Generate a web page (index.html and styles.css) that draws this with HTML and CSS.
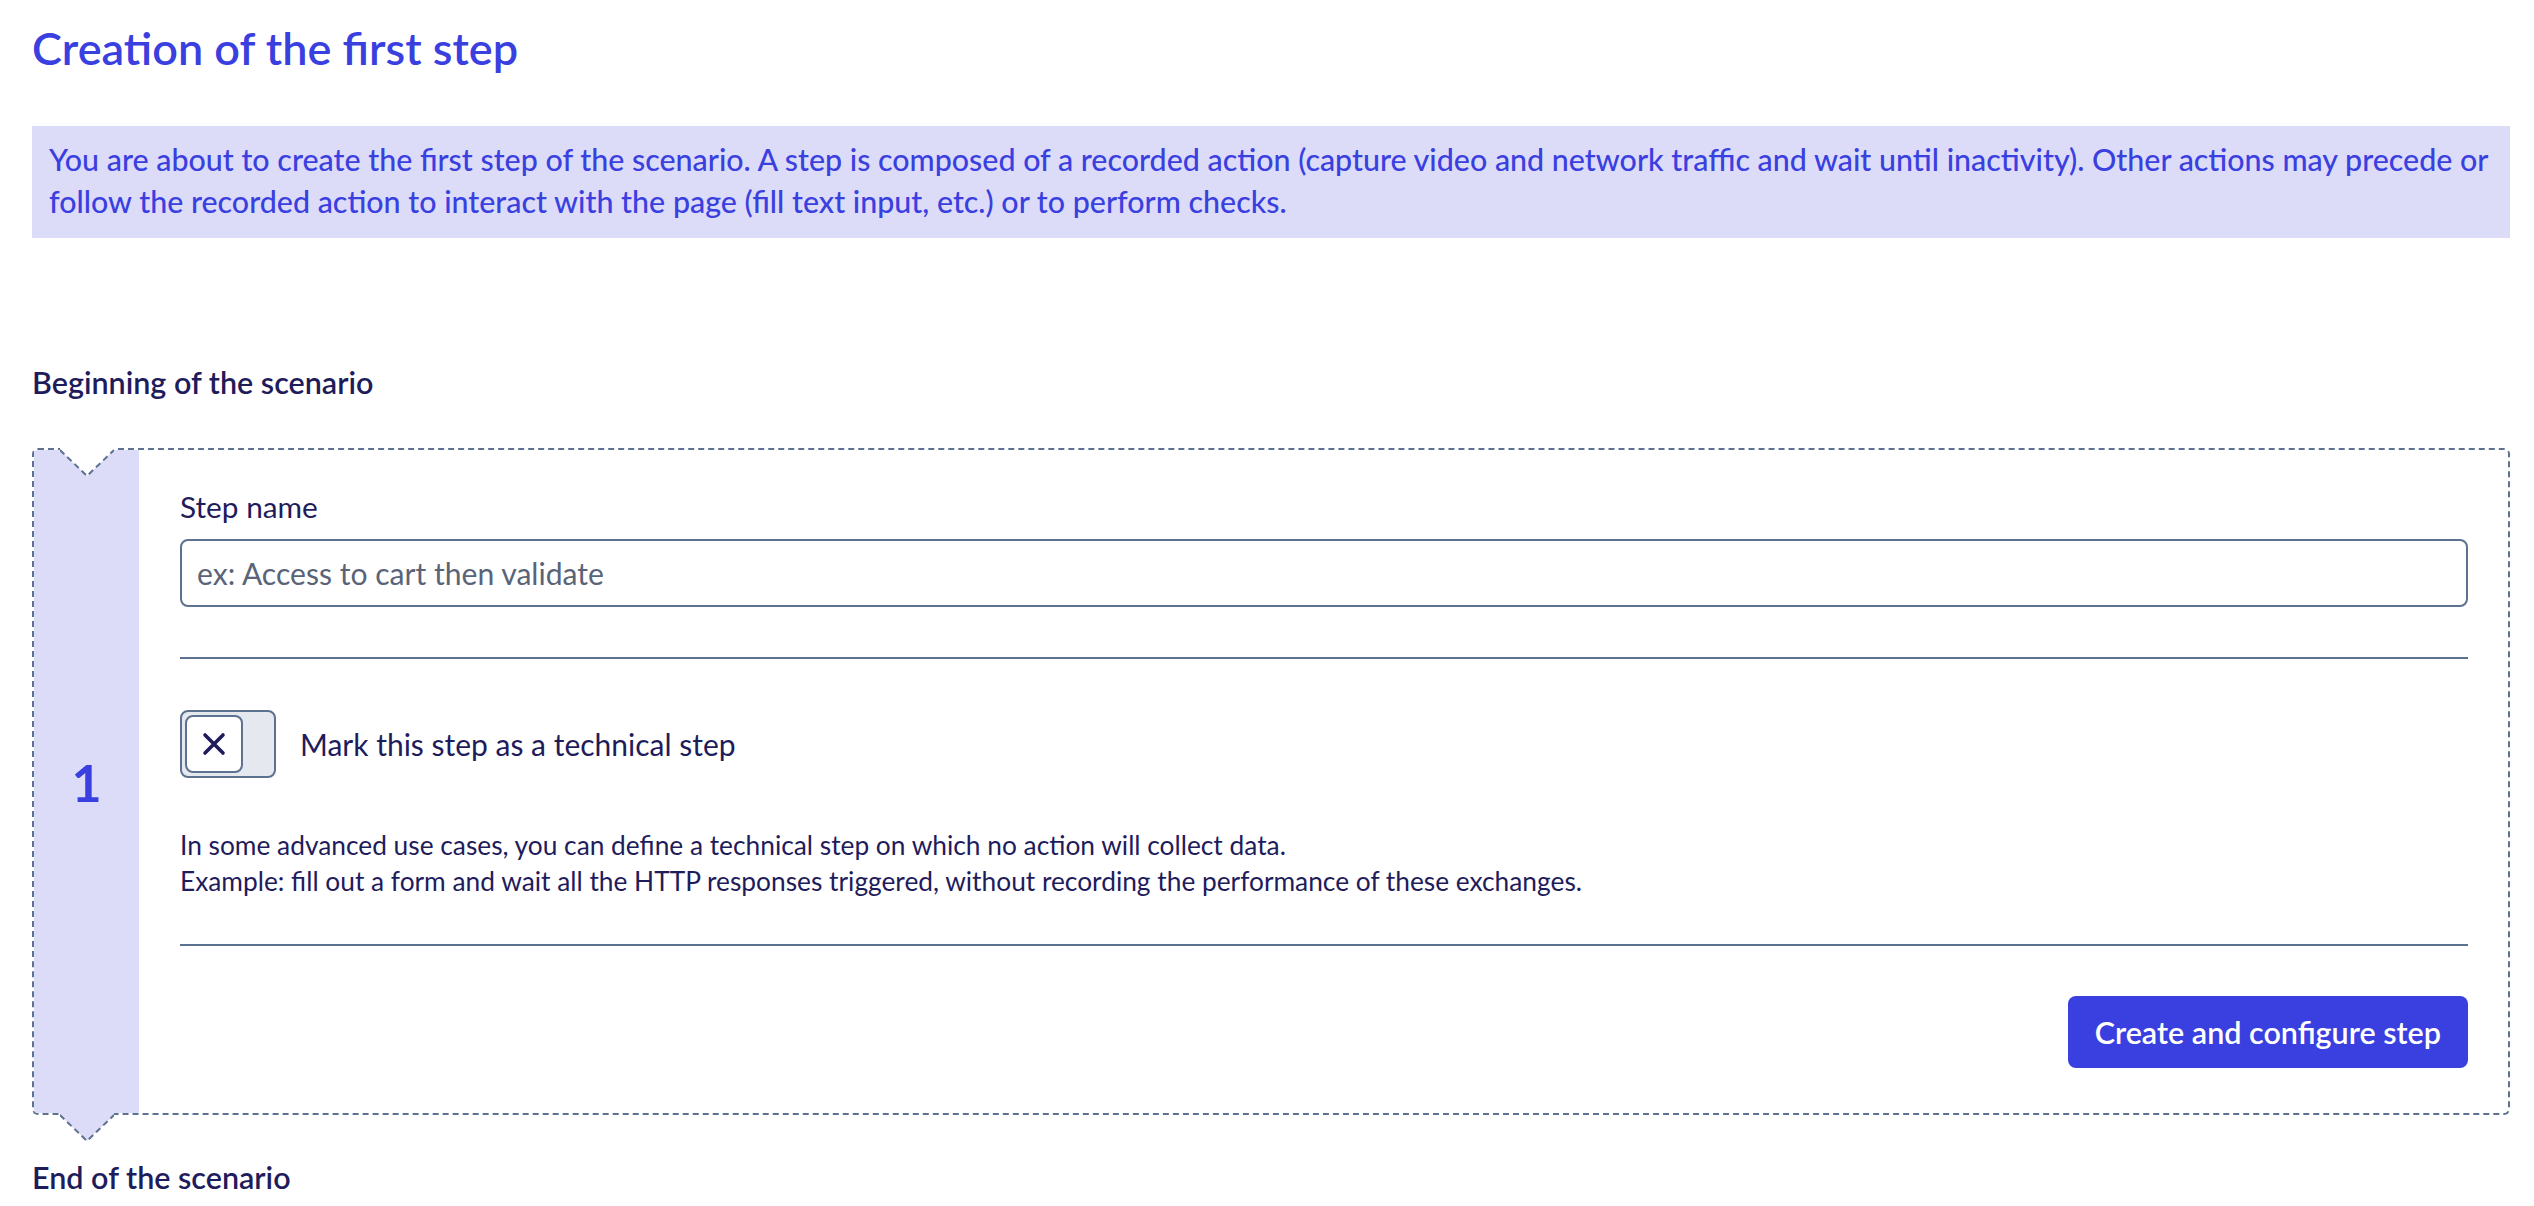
FILE: index.html
```html
<!DOCTYPE html>
<html lang="en">
<head>
    <meta charset="UTF-8">
    <meta name="viewport" content="width=device-width, initial-scale=1.0">
    <title>Creation of the first step</title>
    <link rel="stylesheet" href="styles.css">
</head>
<body>
    <div class="page">
        <h1 class="page-title">Creation of the first step</h1>

        <div class="info-box">
            You are about to create the first step of the scenario. A step is composed of a recorded action (capture video and network traffic and wait until inactivity). Other actions may precede or follow the recorded action to interact with the page (fill text input, etc.) or to perform checks.
        </div>

        <div class="scenario-label scenario-start">Beginning of the scenario</div>

        <div class="step-card">
            <div class="step-index">
                <svg class="notch" width="54" height="30" viewBox="0 0 54 30">
                    <polygon points="0,0 54,0 54,2 27,28 0,2" fill="#ffffff"/>
                    <polyline points="0,2 27,28 54,2" fill="none" stroke="#5d7190" stroke-width="2" stroke-dasharray="6 4"/>
                </svg>
                <span class="step-number">1</span>
                <svg class="pointer" width="54" height="30" viewBox="0 0 54 30">
                    <polygon points="0,0 54,0 54,2 27,28 0,2" fill="#dcdcf8"/>
                    <polyline points="0,2 27,28 54,2" fill="none" stroke="#5d7190" stroke-width="2" stroke-dasharray="6 4"/>
                </svg>
            </div>

            <div class="step-body">
                <label class="field-label" for="step-name">Step name</label>
                <input class="text-input" id="step-name" type="text" placeholder="ex: Access to cart then validate">

                <hr class="divider">

                <div class="toggle-row">
                    <div class="toggle">
                        <div class="toggle-knob">
                            <svg width="24" height="24" viewBox="0 0 24 24">
                                <path d="M3 3 L21 21 M21 3 L3 21" stroke="#1f1c5c" stroke-width="3.6" stroke-linecap="round"/>
                            </svg>
                        </div>
                    </div>
                    <span class="toggle-label">Mark this step as a technical step</span>
                </div>

                <p class="help-text">
                    In some advanced use cases, you can define a technical step on which no action will collect data.<br>
                    Example: fill out a form and wait all the HTTP responses triggered, without recording the performance of these exchanges.
                </p>

                <hr class="divider">

                <div class="actions">
                    <button class="btn-primary">Create and configure step</button>
                </div>
            </div>
        </div>

        <div class="scenario-label scenario-end">End of the scenario</div>
    </div>
</body>
</html>
```

FILE: styles.css
```css
body {
    margin: 0;
    padding: 0;
    font-family: 'Lato', 'Open Sans', sans-serif;
    color: #1f1c5c;
    background-color: #ffffff;
}

.page {
    padding: 0 24px 0 32px;
}

.page-title {
    margin: 21px 0 51px;
    font-size: 45px;
    line-height: 54px;
    font-weight: 600;
    color: #3a40df;
}

.info-box {
    background-color: #dcdcf8;
    color: #3a40df;
    font-size: 30.4px;
    font-weight: 500;
    line-height: 42px;
    padding: 12px 17px 16px;
}

.scenario-label {
    font-size: 30.5px;
    line-height: 38px;
    font-weight: 600;
    color: #1f1c5c;
}

.scenario-start {
    margin: 125px 0 47px;
}

.scenario-end {
    margin-top: 43px;
}

.step-card {
    display: flex;
    position: relative;
    border: 2px dashed #5d7190;
    border-radius: 6px;
}

.step-index {
    position: relative;
    flex: 0 0 105px;
    background-color: #dcdcf8;
    border-radius: 4px 0 0 4px;
    display: flex;
    align-items: center;
    justify-content: center;
}

.step-number {
    font-size: 52px;
    font-weight: 700;
    color: #3a40df;
}

.notch, .pointer {
    position: absolute;
    left: 26px;
}

.notch {
    top: -2px;
}

.pointer {
    bottom: -30px;
}

.step-body {
    flex: 1;
    padding: 39px 40px 45px 41px;
}

.field-label {
    display: block;
    font-size: 29.8px;
    line-height: 36px;
    margin-bottom: 14px;
}

.text-input {
    display: block;
    box-sizing: border-box;
    width: 100%;
    height: 68px;
    border: 2px solid #5d7190;
    border-radius: 8px;
    padding: 0 15px;
    font-family: inherit;
    font-size: 30.1px;
    color: #1f1c5c;
}

.text-input::placeholder {
    color: #5a6478;
}

.divider {
    border: none;
    border-top: 2px solid #5d7190;
    margin: 50px 0 51px;
}

.toggle-row {
    display: flex;
    align-items: center;
    gap: 24px;
}

.toggle {
    box-sizing: border-box;
    width: 96px;
    height: 68px;
    border: 2px solid #5d7190;
    border-radius: 8px;
    background-color: #e5e8ef;
    padding: 3px;
}

.toggle-knob {
    box-sizing: border-box;
    width: 58px;
    height: 58px;
    border: 2px solid #5d7190;
    border-radius: 8px;
    background-color: #ffffff;
    display: flex;
    align-items: center;
    justify-content: center;
}

.toggle-label {
    font-size: 30px;
}

.help-text {
    font-size: 26.3px;
    line-height: 36px;
    margin: 49px 0 45px;
}

.help-text + .divider {
    margin: 0 0 50px;
}

.actions {
    display: flex;
    justify-content: flex-end;
}

.btn-primary {
    height: 72px;
    padding: 0 27px;
    border: none;
    border-radius: 8px;
    background-color: #3a40df;
    color: #ffffff;
    font-family: inherit;
    font-size: 30.5px;
    font-weight: 600;
    cursor: pointer;
}
```
